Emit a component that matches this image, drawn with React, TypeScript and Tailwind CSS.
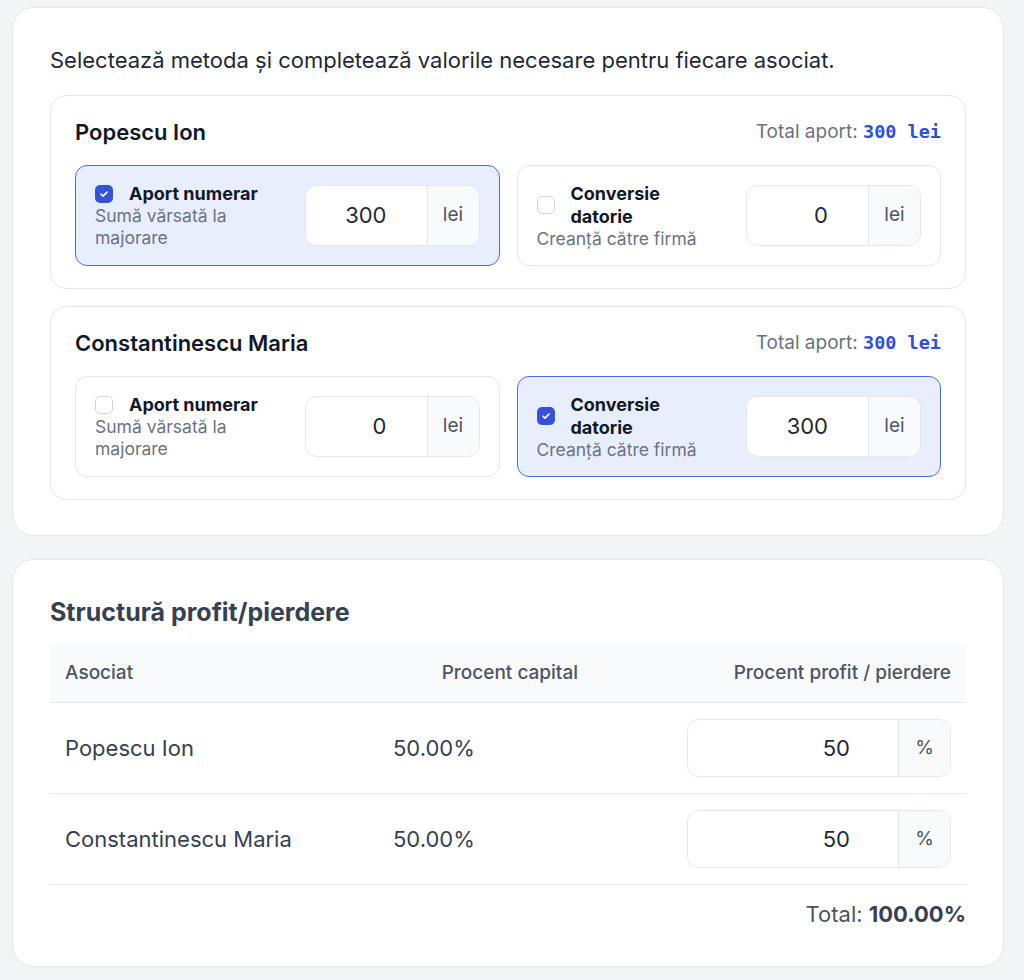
import { useState } from "react";

type Method = "numerar" | "datorie";

type Associate = {
  name: string;
  method: Method;
  amount: number;
  profit: number;
};

const initial: Associate[] = [
  { name: "Popescu Ion", method: "numerar", amount: 300, profit: 50 },
  { name: "Constantinescu Maria", method: "datorie", amount: 300, profit: 50 },
];

function Check({ checked }: { checked: boolean }) {
  if (!checked) {
    return <span className="block h-[18px] w-[18px] shrink-0 rounded-[5px] border border-[#d1d5db] bg-white" />;
  }
  return (
    <span className="flex h-[18px] w-[18px] shrink-0 items-center justify-center rounded-[5px] bg-[#3553d9]">
      <svg viewBox="0 0 16 16" className="h-[12px] w-[12px]" fill="none">
        <path d="M4 8.3l2.6 2.5L12 5.4" stroke="white" strokeWidth="2.2" strokeLinecap="round" strokeLinejoin="round" />
      </svg>
    </span>
  );
}

function AddonInput({ value, unit, pad }: { value: number; unit: string; pad: string }) {
  return (
    <div className="flex h-full overflow-hidden rounded-[12px] border border-[#e5e7eb] bg-white">
      <div className={`flex flex-1 items-center justify-end text-[22px] text-[#1f2937] ${pad}`}>{value}</div>
      <div className="flex w-[52px] items-center justify-center border-l border-[#e5e7eb] bg-[#f9fafb] text-[19px] text-[#4b5563]">
        {unit}
      </div>
    </div>
  );
}

function MethodOption({
  active,
  label,
  hint,
  value,
  onPick,
}: {
  active: boolean;
  label: string;
  hint: string;
  value: number;
  onPick: () => void;
}) {
  return (
    <div
      onClick={onPick}
      className={`flex h-[101px] cursor-pointer items-center gap-[20px] rounded-[12px] border px-[19px] ${
        active ? "border-[#4b6be3] bg-[#e9eefd]" : "border-[#e5e7eb] bg-white"
      }`}
    >
      <div className="min-w-0 flex-1">
        <div className="flex items-center gap-[16px]">
          <Check checked={active} />
          <span className="max-w-[140px] text-[18px] font-bold leading-[23px] text-[#111827]">{label}</span>
        </div>
        <p className="text-[17.5px] leading-[22px] text-[#6b7280]">{hint}</p>
      </div>
      <div className="h-[61px] w-[175px] shrink-0">
        <AddonInput value={value} unit="lei" pad="pr-[40px]" />
      </div>
    </div>
  );
}

export default function App() {
  const [rows, setRows] = useState(initial);

  const pick = (i: number, method: Method) =>
    setRows((prev) => prev.map((r, j) => (j === i ? { ...r, method } : r)));

  const totalCapital = rows.reduce((s, r) => s + r.amount, 0);
  const totalProfit = rows.reduce((s, r) => s + r.profit, 0);

  return (
    <div className="min-h-screen bg-[#f3f4f6] pb-[12px] pl-[12px] pr-[20px] pt-[7px] font-['Inter',sans-serif]">
      <section className="rounded-[22px] border border-[#e5e7eb] bg-white px-[37px] pb-[35px] pt-[38px]">
        <p className="text-[22px] leading-[28px] text-[#1f2937]">
          Selectează metoda și completează valorile necesare pentru fiecare asociat.
        </p>
        <div className="mt-[21px] flex flex-col gap-[17px]">
          {rows.map((r, i) => (
            <div key={r.name} className="rounded-[16px] border border-[#e5e7eb] px-[24px] pb-[22px] pt-[24px]">
              <div className="flex h-[24px] items-center justify-between leading-[24px]">
                <h3 className="text-[22px] font-semibold text-[#111827]">{r.name}</h3>
                <span className="text-[19px] text-[#6b7280]">
                  Total aport:{" "}
                  <span className="font-['DejaVu_Sans_Mono',monospace] text-[18.5px] font-bold text-[#2f50d6]">
                    {r.amount} lei
                  </span>
                </span>
              </div>
              <div className="mt-[21px] grid grid-cols-2 gap-[17px]">
                <MethodOption
                  active={r.method === "numerar"}
                  label="Aport numerar"
                  hint="Sumă vărsată la majorare"
                  value={r.method === "numerar" ? r.amount : 0}
                  onPick={() => pick(i, "numerar")}
                />
                <MethodOption
                  active={r.method === "datorie"}
                  label="Conversie datorie"
                  hint="Creanță către firmă"
                  value={r.method === "datorie" ? r.amount : 0}
                  onPick={() => pick(i, "datorie")}
                />
              </div>
            </div>
          ))}
        </div>
      </section>

      <section className="mt-[23px] rounded-[22px] border border-[#e5e7eb] bg-white px-[37px] pb-[38px] pt-[37px]">
        <h2 className="text-[25px] font-bold leading-[30px] text-[#374151]">Structură profit/pierdere</h2>
        <table className="mt-[17px] w-full border-collapse text-left">
          <colgroup>
            <col className="w-[328px]" />
            <col className="w-[215px]" />
            <col />
          </colgroup>
          <thead>
            <tr className="h-[58px] border-b border-[#e5e7eb] bg-[#f9fafb] text-[19px] leading-[24px] text-[#4b5563]">
              <th className="px-[15px] font-medium">Asociat</th>
              <th className="px-[15px] text-right font-medium">Procent capital</th>
              <th className="px-[15px] text-right font-medium">Procent profit / pierdere</th>
            </tr>
          </thead>
          <tbody>
            {rows.map((r) => (
              <tr key={r.name} className="border-b border-[#e5e7eb] text-[22px] leading-[28px] text-[#374151]">
                <td className="px-[15px]">{r.name}</td>
                <td className="px-[15px]">{((r.amount / totalCapital) * 100).toFixed(2)}%</td>
                <td className="px-[15px] py-[16px]">
                  <div className="ml-auto h-[58px] w-[264px]">
                    <AddonInput value={r.profit} unit="%" pad="pr-[48px]" />
                  </div>
                </td>
              </tr>
            ))}
          </tbody>
        </table>
        <div className="pt-[15px] text-right text-[22px] leading-[28px] text-[#4b5563]">
          Total: <span className="font-bold text-[#374151]">{totalProfit.toFixed(2)}%</span>
        </div>
      </section>
    </div>
  );
}
